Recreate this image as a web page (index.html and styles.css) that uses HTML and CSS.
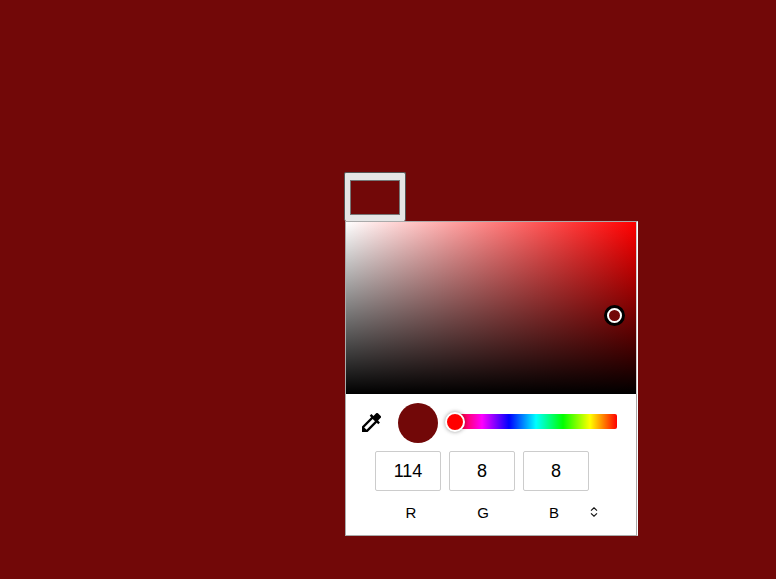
FILE: index.html
```html
<!DOCTYPE html>
<html lang="en">
<head>
<meta charset="utf-8">
<title>Color picker</title>
<link rel="stylesheet" href="styles.css">
</head>
<body>
<main class="picker">
  <button class="swatch" aria-label="Choose color"><span class="swatch-color"></span></button>
  <section class="popup">
    <div class="shade"><span class="shade-thumb"></span></div>
    <div class="controls">
      <svg class="dropper" viewBox="1 1 18 18" width="19" height="19">
        <path fill="#000" fill-rule="evenodd" d="M14.4 1.3L11.9 3.8L9.9 2L8.3 3.6L9.7 5L1 13.7V19H6.3L15 10.3L16.4 11.7L18 10.1L16.2 8.1L18.7 5.6Q19.5 4.7 18.7 3.9L16.1 1.3Q15.2.5 14.4 1.3ZM5.3 16.9L3.1 14.7L11.1 6.7L13.3 8.9Z"/>
      </svg>
      <span class="preview"></span>
      <div class="hue"><span class="hue-thumb"></span></div>
    </div>
    <div class="fields">
      <label class="field"><span class="value">114</span><span class="name name-r">R</span></label>
      <label class="field"><span class="value">8</span><span class="name name-g">G</span></label>
      <label class="field"><span class="value">8</span><span class="name name-b">B</span></label>
      <svg class="format" viewBox="0 0 8 10" width="8" height="10">
        <path fill="none" stroke="#111" stroke-width="1.2" d="M1 3.6L4 .9L7 3.6M1 6.4L4 9.1L7 6.4"/>
      </svg>
    </div>
  </section>
</main>
</body>
</html>
```
FILE: styles.css
```css
*, *::before { box-sizing: border-box; }
body {
  margin: 0;
  min-height: 579px;
  background: #720808;
  font-family: "Liberation Sans", Arial, sans-serif;
  color: #000;
}
.picker {
  padding: 172px 0 0 344px;
}
.swatch {
  display: block;
  width: 62px;
  height: 49px;
  padding: 7px 5px;
  border: 1px solid #555;
  border-bottom: 0;
  border-radius: 2px;
  background: #e5e5e5;
}
.swatch-color {
  display: block;
  height: 35px;
  border: 1px solid #777;
  background: #720808;
}
.popup {
  width: 293px;
  height: 315px;
  margin-left: 1px;
  border: 1px solid #aaa;
  border-right: 1px solid #fff;
  background: #fff;
}
.shade {
  position: relative;
  width: 291px;
  height: 172px;
  border-right: 1px solid #ccc;
  background: linear-gradient(to top, #000, transparent), linear-gradient(to right, #fff, #f00);
}
.shade-thumb {
  position: absolute;
  left: 258px;
  top: 83px;
  width: 21px;
  height: 21px;
  padding: 3px;
  border-radius: 50%;
  background: #000;
}
.shade-thumb::before {
  content: "";
  display: block;
  width: 15px;
  height: 15px;
  border: 2px solid #fff;
  border-radius: 50%;
  background: #720808;
}
.controls {
  display: flex;
  align-items: center;
  width: 291px;
  height: 57px;
  padding-left: 16px;
  border-right: 1px solid #aaa;
}
.preview {
  width: 40px;
  height: 40px;
  margin-left: 17px;
  border-radius: 50%;
  background: #720808;
}
.hue {
  position: relative;
  width: 162px;
  height: 15px;
  margin: -2px 0 0 17px;
  border-radius: 2px;
  background: linear-gradient(to right, #f00, #f0f, #00f, #0ff, #0f0, #ff0, #f00);
}
.hue-thumb {
  position: absolute;
  left: -10px;
  top: -2px;
  width: 20px;
  height: 20px;
  border: 2px solid #fff;
  border-radius: 50%;
  background: #f00;
  box-shadow: 0 0 4px rgba(0, 0, 0, .4);
}
.fields {
  display: flex;
  gap: 8px;
  width: 291px;
  height: 84px;
  padding-left: 29px;
  border-right: 1px solid #aaa;
}
.field { width: 66px; }
.value {
  display: block;
  height: 40px;
  border: 1px solid #ccc;
  border-radius: 2px;
  font-size: 18px;
  line-height: 38px;
  text-align: center;
}
.name {
  display: block;
  font-size: 15px;
  line-height: 17px;
  margin-top: 13px;
  text-align: center;
}
.name-r { padding-left: 6px; }
.name-g { padding-left: 2px; }
.name-b { padding-right: 4px; }
.format { margin: 56px 0 0 -7px; }
```
